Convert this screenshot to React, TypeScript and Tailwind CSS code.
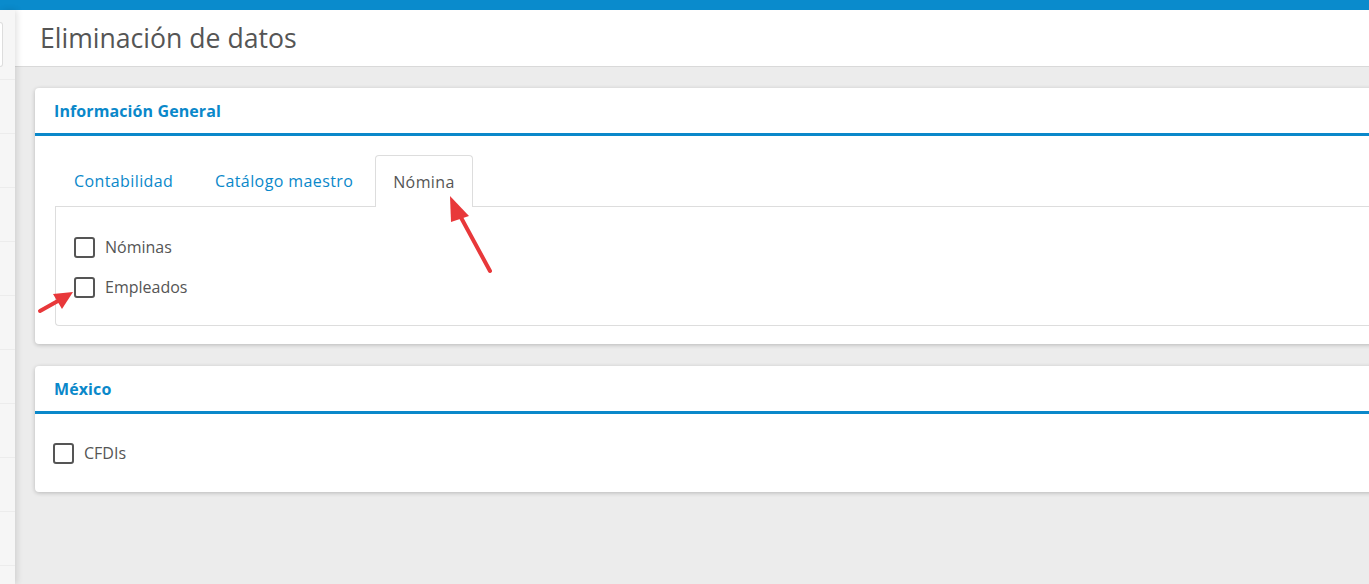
import React from "react";

const font = { fontFamily: '"Open Sans", "Liberation Sans", sans-serif' };

const Checkbox: React.FC<{ label: string }> = ({ label }) => (
  <label className="flex items-center gap-[10px] h-[20px]">
    <span className="w-[21px] h-[21px] rounded-[3px] border-2 border-[#555] bg-white shrink-0" />
    <span className="text-[16px] text-[#555] leading-none">{label}</span>
  </label>
);

const Card: React.FC<{ title: string; children: React.ReactNode }> = ({ title, children }) => (
  <div className="bg-white rounded-[4px] shadow-[0_1px_4px_rgba(0,0,0,0.22)]">
    <div className="h-[48px] flex items-center pl-[19px] border-b-[3px] border-[#0a88ca]">
      <span className="text-[16px] tracking-[0.1px] font-bold text-[#0a88ca]">{title}</span>
    </div>
    {children}
  </div>
);

export default function App() {
  return (
    <div className="w-[1369px] h-[584px] overflow-hidden bg-[#ececec] flex flex-col" style={font}>
      <div className="h-[10px] bg-[#0a8bcc] shrink-0" />
      <div className="flex flex-1 min-h-0">
        {/* sidebar edge */}
        <div className="w-[15px] shrink-0 bg-[#f6f6f6] shadow-[2px_0_6px_rgba(0,0,0,0.12)] z-10 flex flex-col">
          <div className="h-[12px]" />
          <div className="h-[45px] w-[3px] border border-l-0 border-[#ddd] rounded-r-[4px] bg-white" />
          <div className="h-[13px] border-b border-[#ececec]" />
          {[0, 1, 2, 3, 4, 5, 6, 7, 8].map((i) => (
            <div key={i} className="h-[54px] border-b border-[#ececec] shrink-0" />
          ))}
        </div>

        <div className="flex-1 min-w-0 relative">
          <div className="h-[57px] bg-white border-b border-[#d9d9d9] flex items-center pl-[25px]">
            <h1 className="text-[26.6px] text-[#555] leading-none">Eliminación de datos</h1>
          </div>

          <div className="pl-[20px] pt-[21px] w-[1400px] flex flex-col gap-[22px]">
            <Card title="Información General">
              <div className="pl-[20px] pt-[19px] pb-[18px]">
                <div className="flex items-end h-[52px] border-b border-[#ddd] text-[16px] tracking-[0.4px]">
                  <div className="w-[139px] pl-[19px] h-[51px] flex items-center text-[#0a88ca]">Contabilidad</div>
                  <div className="w-[181px] pl-[21px] h-[51px] flex items-center text-[#0a88ca]">Catálogo maestro</div>
                  <div className="w-[98px] h-[52px] -mb-px flex items-center justify-center text-[#555] bg-white border border-b-0 border-[#ddd] rounded-t-[4px]">
                    Nómina
                  </div>
                </div>
                <div className="h-[119px] border border-t-0 border-r-0 border-[#ddd] rounded-bl-[4px] pl-[18px] pt-[30px] flex flex-col gap-[20px]">
                  <Checkbox label="Nóminas" />
                  <Checkbox label="Empleados" />
                </div>
              </div>
            </Card>

            <Card title="México">
              <div className="pl-[18px] pt-[29px] pb-[29px]">
                <Checkbox label="CFDIs" />
              </div>
            </Card>
          </div>

          {/* annotation arrows */}
          <svg className="absolute left-0 top-0 pointer-events-none" width="1354" height="574">
            <g stroke="#e8383a" strokeWidth="4" strokeLinecap="round" fill="#e8383a">
              <line x1="475" y1="261" x2="443" y2="202" />
              <polygon points="435,186 454,206 436,212" stroke="none" />
              <line x1="25" y1="301" x2="50" y2="287" />
              <polygon points="58,282 47,299 38,284" stroke="none" />
            </g>
          </svg>
        </div>
      </div>
    </div>
  );
}
